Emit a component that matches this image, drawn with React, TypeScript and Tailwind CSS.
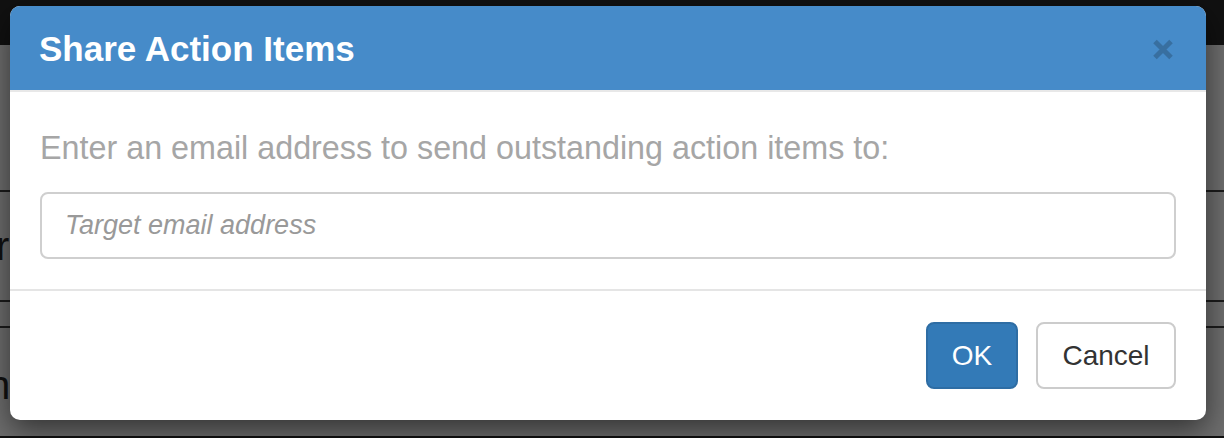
import React from 'react';

const font = { fontFamily: '"Liberation Sans", Arial, sans-serif' };

const CloseIcon: React.FC = () => (
  <svg width="22" height="23" viewBox="0 0 22 23" className="block">
    <path d="M3 3.5 L19 19.5 M19 3.5 L3 19.5" stroke="#386fa0" strokeWidth="5" strokeLinecap="butt" />
  </svg>
);

const App: React.FC = () => {
  return (
    <div className="relative h-[438px] w-[1224px] overflow-hidden bg-[#6e6e6e]" style={font}>
      {/* page behind the backdrop */}
      <div className="flex h-full flex-col">
        <div className="h-[45px] bg-[#111]" />
        <div className="h-[145px]" />
        <div className="h-[2px] bg-[#1c1c1c]" />
        <div className="flex h-[108px] items-center">
          <span className="-ml-[4px] text-[40px] leading-none text-[#111]">r</span>
        </div>
        <div className="h-[2px] bg-[#1c1c1c]" />
        <div className="h-[24px]" />
        <div className="h-[2px] bg-[#1c1c1c]" />
        <div className="flex h-[108px] items-center pt-[6px]">
          <span className="-ml-[12px] text-[40px] leading-none text-[#111]">n</span>
        </div>
        <div className="flex-1 bg-[#111]" />
      </div>

      {/* modal */}
      <div className="absolute left-[10px] top-[6px] w-[1196px] overflow-hidden rounded-[10px] bg-white shadow-[0_10px_30px_rgba(0,0,0,0.55)]">
        <div className="flex h-[86px] items-center justify-between border-b-2 border-[#e8e8e8] bg-[#468bc9] pl-[29px] pr-[32px]">
          <h4 className="text-[35px] font-bold leading-none text-white">Share Action Items</h4>
          <button className="mt-[2px]">
            <CloseIcon />
          </button>
        </div>

        <div className="px-[30px] pb-[30px] pt-[38px]">
          <p className="text-[32.3px] leading-[36px] text-[#a6a6a6]">
            Enter an email address to send outstanding action items to:
          </p>
          <input
            type="text"
            placeholder="Target email address"
            className="mt-[26px] h-[67px] w-full rounded-[8px] border-2 border-[#cfcfcf] px-[23px] text-[27px] italic text-[#555] placeholder:text-[#999] outline-none"
          />
        </div>

        <div className="flex justify-end gap-[18px] border-t-2 border-[#e5e5e5] px-[30px] pb-[31px] pt-[31px]">
          <button className="h-[67px] w-[92px] rounded-[8px] border-2 border-[#2e6da4] bg-[#337ab7] text-[28px] text-white">
            OK
          </button>
          <button className="h-[67px] w-[140px] rounded-[8px] border-2 border-[#cccccc] bg-white text-[28px] text-[#333]">
            Cancel
          </button>
        </div>
      </div>
    </div>
  );
};

export default App;
